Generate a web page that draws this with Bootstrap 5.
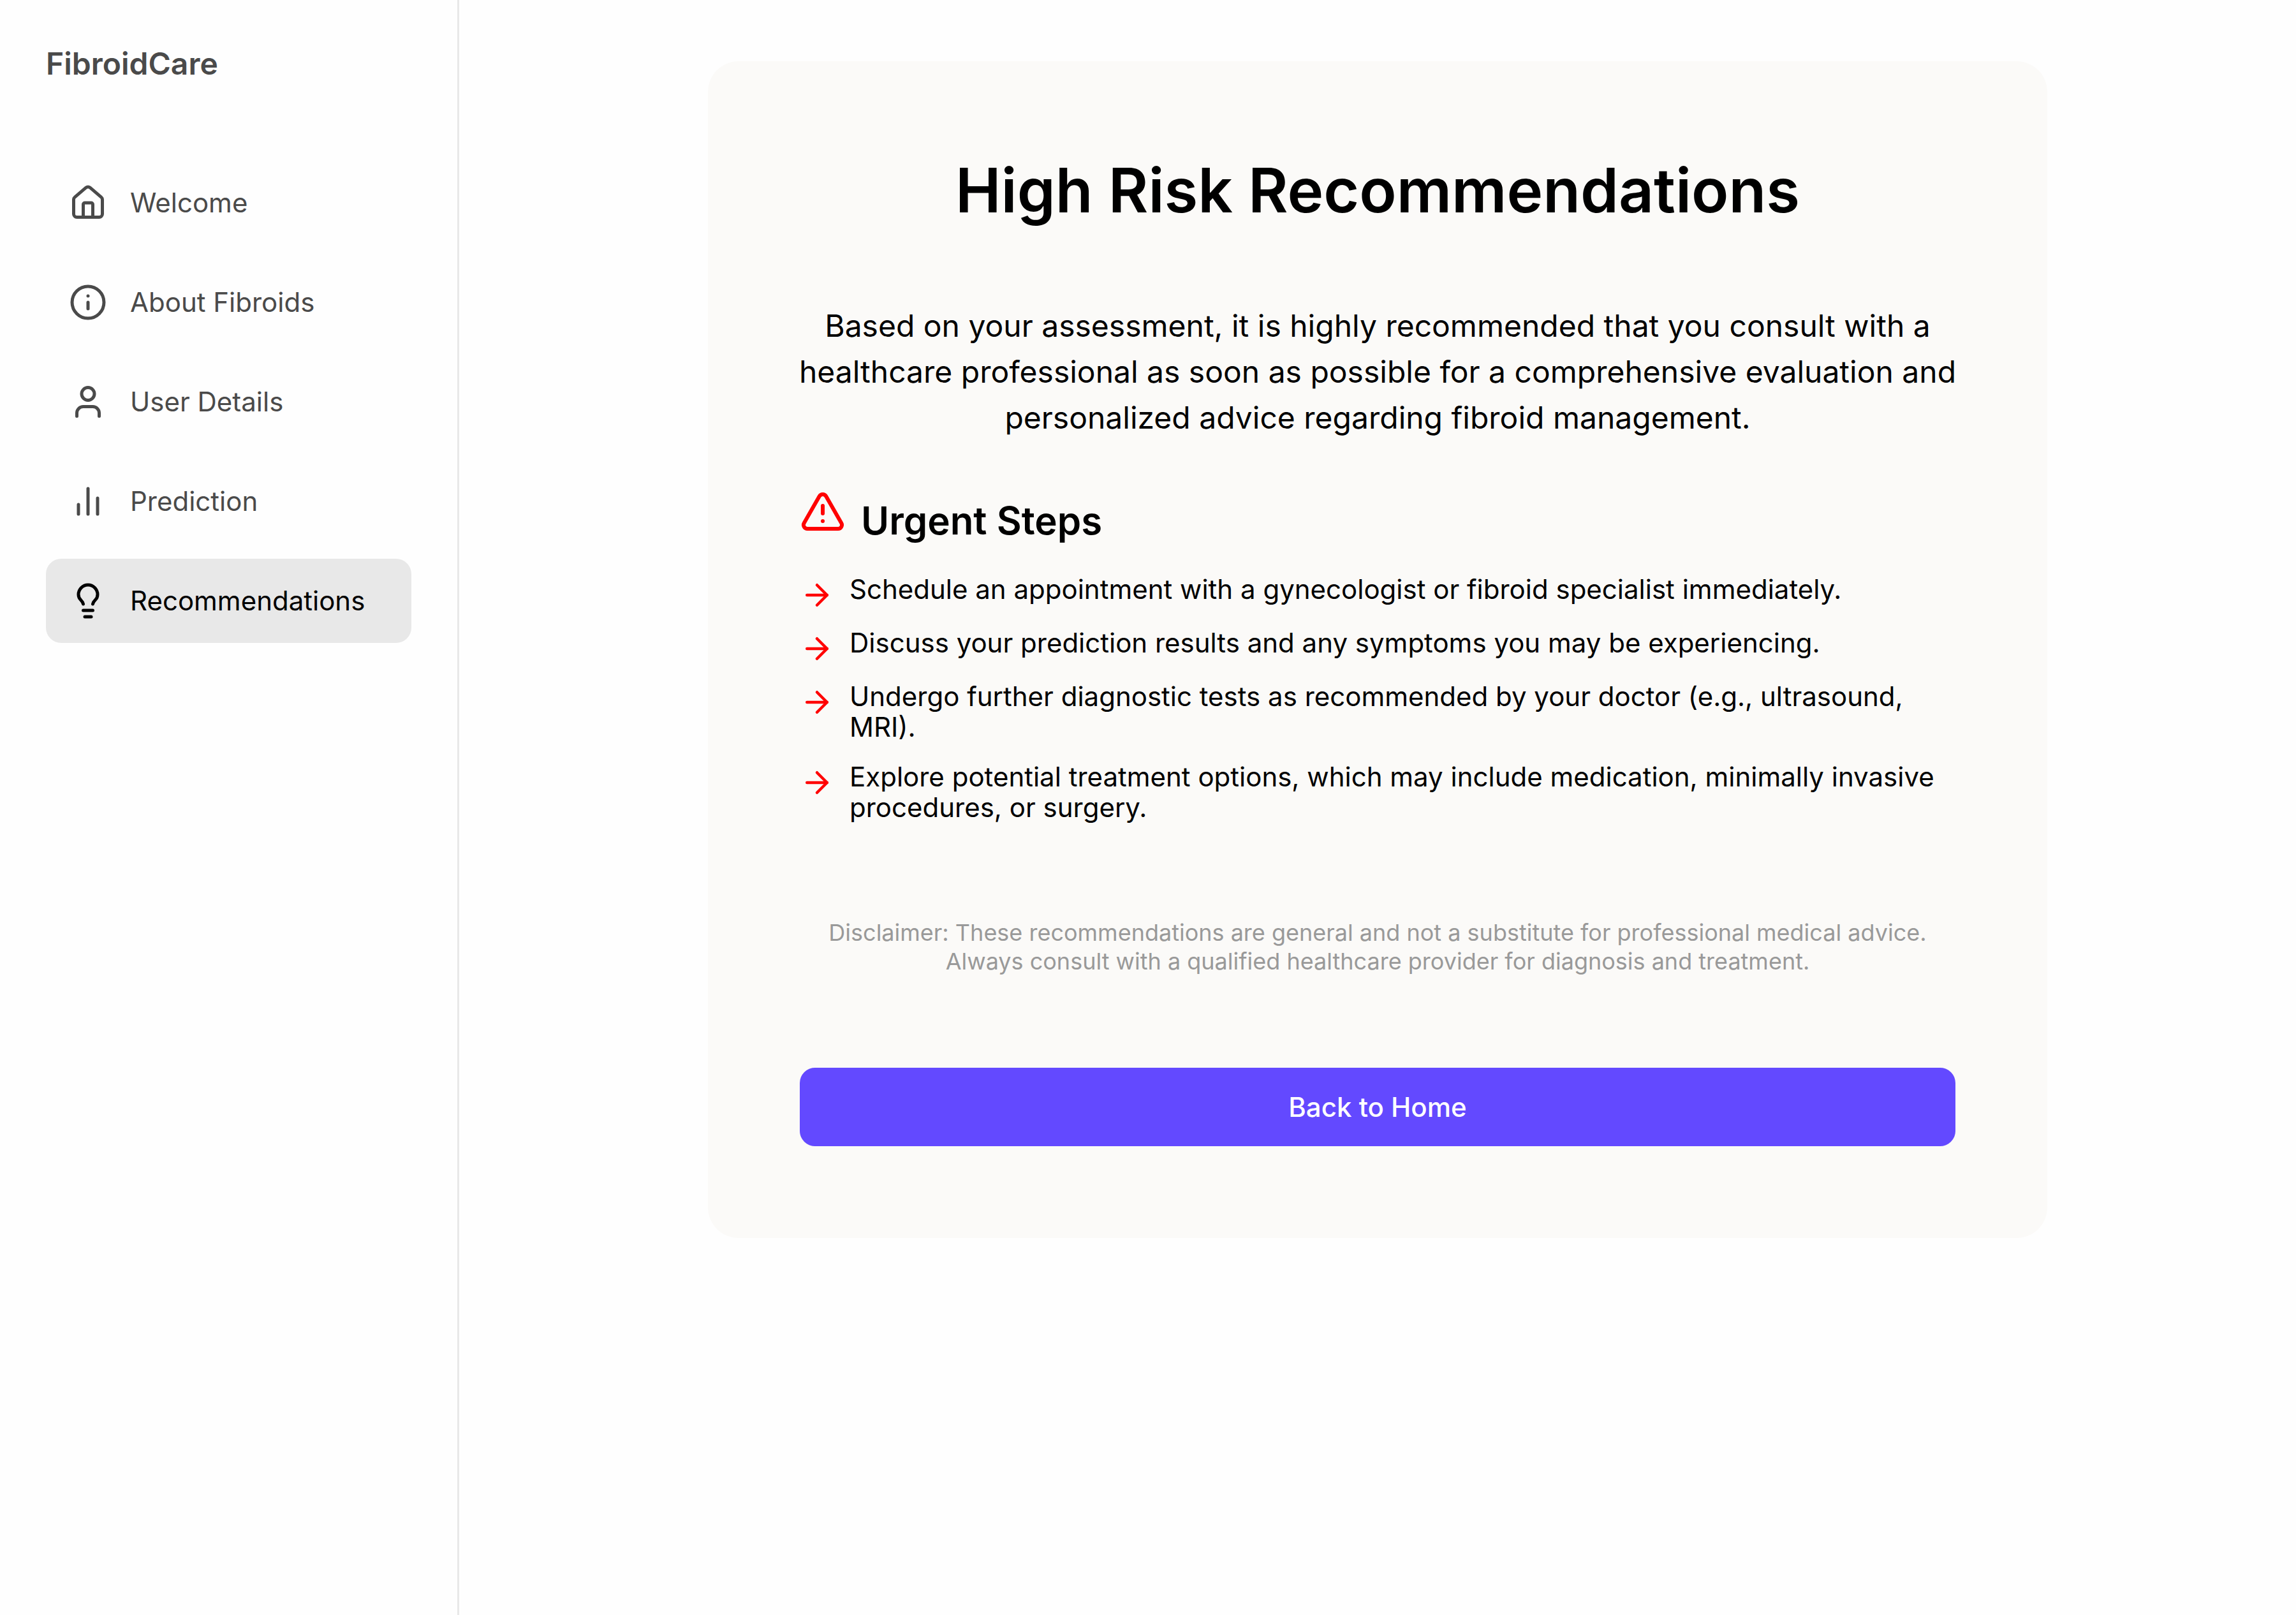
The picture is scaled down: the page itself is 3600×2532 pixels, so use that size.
<!DOCTYPE html>
<html lang="en">
<head>
<meta charset="utf-8">
<meta name="viewport" content="width=device-width, initial-scale=1">
<title>FibroidCare – Recommendations</title>
<link href="https://cdn.jsdelivr.net/npm/bootstrap@5.3.0/dist/css/bootstrap.min.css" rel="stylesheet">
<style>
  body { font-family: Inter, "Liberation Sans", sans-serif; font-size: 42px; line-height: 48px; color: #000; background: #fefefe; }
  svg { fill: none; stroke: currentColor; stroke-width: 2; stroke-linecap: round; stroke-linejoin: round; }
  .side-panel { width: 720px; padding: 72px; border-right: 3px solid #e8e8e8; }
  .brand-name { font-size: 48px; line-height: 56px; margin-bottom: 124px; color: #4a4a4a; }
  .side-links { gap: 24px; }
  .side-links .nav-link { gap: 36px; padding: 36px; border-radius: 24px; color: #4a4a4a; }
  .side-links .nav-link svg { width: 60px; height: 60px; }
  .side-links .nav-link.active { background: #e8e8e8; color: #000; }
  .page-main { padding: 96px 72px; }
  .advice-card { width: 100%; max-width: 2100px; padding: 144px; border-radius: 48px; background: #fbfaf8; }
  .advice-title { font-size: 96px; line-height: 116px; margin-bottom: 119px; }
  .advice-intro { font-size: 48px; line-height: 72px; margin: 0 -6px 75px; }
  .steps-title { font-size: 60px; line-height: 72px; margin-bottom: 48px; }
  .steps-title svg { width: 72px; height: 72px; margin-right: 24px; color: #f00; vertical-align: baseline; }
  .steps-list { gap: 30px; margin-bottom: 150px; }
  .steps-list li { gap: 24px; }
  .steps-list svg { width: 54px; height: 54px; margin: 6px 0 -6px; color: #f00; }
  .disclaimer { font-size: 36px; line-height: 45px; margin-bottom: 144px; color: #999; }
  .btn-home { --bs-btn-color: #fff; --bs-btn-bg: #6349ff; --bs-btn-hover-color: #fff; --bs-btn-hover-bg: #5038e6; --bs-btn-font-size: 42px; --bs-btn-line-height: 51px; --bs-btn-font-weight: 500; --bs-btn-padding-y: 36px; --bs-btn-border-width: 0; --bs-btn-border-radius: 24px; }
</style>
</head>
<body>
<div class="d-flex min-vh-100">
  <aside class="side-panel flex-shrink-0">
    <div class="brand-name fw-semibold">FibroidCare</div>
    <nav class="nav flex-column side-links" aria-label="Main">
      <a class="nav-link d-flex align-items-center" href="#">
        <svg viewBox="0 0 24 24" aria-hidden="true"><path d="M15 21v-8a1 1 0 0 0-1-1h-4a1 1 0 0 0-1 1v8"/><path d="M3 10a2 2 0 0 1 .709-1.528l7-5.999a2 2 0 0 1 2.582 0l7 5.999A2 2 0 0 1 21 10v9a2 2 0 0 1-2 2H5a2 2 0 0 1-2-2z"/></svg>
        <span>Welcome</span>
      </a>
      <a class="nav-link d-flex align-items-center" href="#">
        <svg viewBox="0 0 24 24" aria-hidden="true"><circle cx="12" cy="12" r="10"/><path d="M12 16v-4"/><path d="M12 8h.01"/></svg>
        <span>About Fibroids</span>
      </a>
      <a class="nav-link d-flex align-items-center" href="#">
        <svg viewBox="0 0 24 24" aria-hidden="true"><path d="M19 21v-2a4 4 0 0 0-4-4H9a4 4 0 0 0-4 4v2"/><circle cx="12" cy="7" r="4"/></svg>
        <span>User Details</span>
      </a>
      <a class="nav-link d-flex align-items-center" href="#">
        <svg viewBox="0 0 24 24" aria-hidden="true"><path d="M18 20V10"/><path d="M12 20V4"/><path d="M6 20v-6"/></svg>
        <span>Prediction</span>
      </a>
      <a class="nav-link active d-flex align-items-center" href="#" aria-current="page">
        <svg viewBox="0 0 24 24" aria-hidden="true"><path d="M15 14c.2-1 .7-1.7 1.5-2.5 1-.9 1.5-2.2 1.5-3.5A6 6 0 0 0 6 8c0 1 .2 2.2 1.5 3.5.7.7 1.3 1.5 1.5 2.5"/><path d="M9 18h6"/><path d="M10 22h4"/></svg>
        <span>Recommendations</span>
      </a>
    </nav>
  </aside>
  <main class="page-main flex-grow-1 d-flex justify-content-center align-items-start">
    <section class="advice-card">
      <h1 class="advice-title fw-semibold text-center">High Risk Recommendations</h1>
      <p class="advice-intro text-center">Based on your assessment, it is highly recommended that you consult with a healthcare professional as soon as possible for a comprehensive evaluation and personalized advice regarding fibroid management.</p>
      <h2 class="steps-title fw-semibold"><svg viewBox="0 0 24 24" aria-hidden="true"><path d="m21.73 18-8-14a2 2 0 0 0-3.48 0l-8 14A2 2 0 0 0 4 21h16a2 2 0 0 0 1.73-3"/><path d="M12 9v4"/><path d="M12 17h.01"/></svg>Urgent Steps</h2>
      <ul class="steps-list list-unstyled d-flex flex-column">
        <li class="d-flex align-items-start">
          <svg class="flex-shrink-0" viewBox="0 0 24 24" aria-hidden="true"><path d="M5 12h14"/><path d="m12 5 7 7-7 7"/></svg>
          <span>Schedule an appointment with a gynecologist or fibroid specialist immediately.</span>
        </li>
        <li class="d-flex align-items-start">
          <svg class="flex-shrink-0" viewBox="0 0 24 24" aria-hidden="true"><path d="M5 12h14"/><path d="m12 5 7 7-7 7"/></svg>
          <span>Discuss your prediction results and any symptoms you may be experiencing.</span>
        </li>
        <li class="d-flex align-items-start">
          <svg class="flex-shrink-0" viewBox="0 0 24 24" aria-hidden="true"><path d="M5 12h14"/><path d="m12 5 7 7-7 7"/></svg>
          <span>Undergo further diagnostic tests as recommended by your doctor (e.g., ultrasound, MRI).</span>
        </li>
        <li class="d-flex align-items-start">
          <svg class="flex-shrink-0" viewBox="0 0 24 24" aria-hidden="true"><path d="M5 12h14"/><path d="m12 5 7 7-7 7"/></svg>
          <span>Explore potential treatment options, which may include medication, minimally invasive procedures, or surgery.</span>
        </li>
      </ul>
      <p class="disclaimer text-center">Disclaimer: These recommendations are general and not a substitute for professional medical advice. Always consult with a qualified healthcare provider for diagnosis and treatment.</p>
      <button type="button" class="btn btn-home w-100">Back to Home</button>
    </section>
  </main>
</div>
<script src="https://cdn.jsdelivr.net/npm/bootstrap@5.3.0/dist/js/bootstrap.bundle.min.js"></script>
</body>
</html>
